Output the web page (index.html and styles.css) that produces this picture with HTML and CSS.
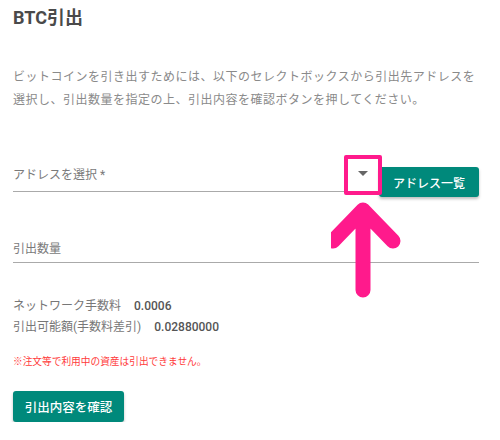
FILE: index.html
```html
<!DOCTYPE html>
<html lang="ja">
<head>
    <meta charset="UTF-8" />
    <meta name="viewport" content="width=device-width, initial-scale=1.0" />
    <title>BTC引出</title>
    <link rel="stylesheet" href="styles.css">
</head>
<body>
    <h1 class="page-title">BTC引出</h1>

    <p class="intro">ビットコインを引き出すためには、以下のセレクトボックスから引出先アドレスを選択し、引出数量を指定の上、引出内容を確認ボタンを押してください。</p>

    <div class="address-row">
        <div class="field select-field">
            <span class="field-label">アドレスを選択 *</span>
            <span class="select-arrow"></span>
        </div>
        <button class="btn btn-small">アドレス一覧</button>

        <!-- 注釈 -->
        <div class="mark-box"></div>
        <svg class="mark-arrow" width="80" height="100" viewBox="0 0 80 100">
            <path d="M32 88 L32 8 M2 39 L32 8 L62 39" fill="none" stroke="#ff1a8c" stroke-width="15" stroke-linecap="round" stroke-linejoin="round" />
        </svg>
    </div>

    <div class="field amount-field">
        <span class="field-label">引出数量</span>
    </div>

    <div class="fees">
        <div class="fee-row"><span class="fee-name">ネットワーク手数料</span><span class="fee-value">0.0006</span></div>
        <div class="fee-row"><span class="fee-name">引出可能額(手数料差引)</span><span class="fee-value">0.02880000</span></div>
    </div>

    <p class="notice">※注文等で利用中の資産は引出できません。</p>

    <button class="btn btn-confirm">引出内容を確認</button>
</body>
</html>
```

FILE: styles.css
```css
body {
    font-family: Roboto, "Noto Sans CJK JP", sans-serif;
    background: #fff;
    color: #555;
    margin: 0;
    padding: 0 13px;
}

.page-title {
    font-size: 18px;
    font-weight: bold;
    color: #4a4a4a;
    margin: 6px 0 0;
    line-height: 24px;
}

.intro {
    font-size: 12px;
    letter-spacing: 0.5px;
    line-height: 23px;
    color: #8a8a8a;
    margin: 36px 0 0;
}

.address-row {
    position: relative;
    display: flex;
    align-items: flex-end;
    margin-top: 46px;
}

.field {
    box-sizing: border-box;
    display: flex;
    align-items: center;
    border-bottom: 1px solid #aaa;
}

.field-label {
    font-size: 12px;
    color: #7a7a7a;
}

.select-field {
    flex: 1;
    height: 34px;
    padding-bottom: 2px;
    margin: 0 6px 5px 0;
}

.select-arrow {
    margin-left: auto;
    margin-right: 5px;
    width: 0;
    height: 0;
    border-left: 5px solid transparent;
    border-right: 5px solid transparent;
    border-top: 5px solid #666;
}

.btn {
    font-family: inherit;
    background: #00897b;
    color: #fff;
    border: none;
    border-radius: 3px;
    box-shadow: 0 2px 3px rgba(0, 0, 0, 0.25);
    font-weight: 500;
}

.btn-small {
    font-size: 12px;
    height: 30px;
    width: 100px;
    padding: 0;
    margin-right: 8px;
}

.mark-box {
    position: absolute;
    box-sizing: border-box;
    left: 331px;
    top: -3px;
    width: 38px;
    height: 40px;
    border: 4px solid #ff1a8c;
    border-radius: 2px;
}

.mark-arrow {
    position: absolute;
    left: 318px;
    top: 44px;
}

.amount-field {
    height: 30px;
    margin: 36px 8px 0 0;
}

.fees {
    margin-top: 33px;
    font-size: 12px;
    line-height: 21px;
}

.fee-name {
    color: #777;
}

.fee-value {
    font-weight: 500;
    color: #555;
    margin-left: 13px;
}

.notice {
    font-size: 9.7px;
    line-height: 14px;
    color: #ff3b3b;
    margin: 17px 0 0;
}

.btn-confirm {
    display: block;
    font-size: 12.5px;
    height: 31px;
    width: 111px;
    padding: 0;
    margin-top: 22px;
}
```
